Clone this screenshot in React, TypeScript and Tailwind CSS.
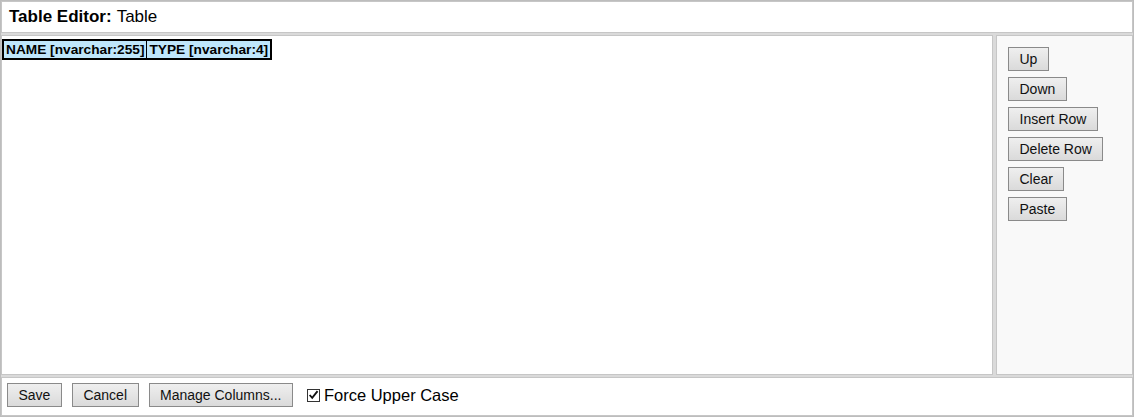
const font = { fontFamily: '"Liberation Sans", Arial, sans-serif' };

const btn =
  'h-[24px] border border-[#8a8a8a] bg-gradient-to-b from-[#efefef] to-[#dadada] px-[10.5px] text-[14px] leading-none text-[#111]';

function SideButton({ label }: { label: string }) {
  return <button type="button" className={btn}>{label}</button>;
}

function CheckMark() {
  return (
    <span className="flex h-[13px] w-[13px] items-center justify-center border border-[#333] bg-white">
      <svg viewBox="0 0 12 12" className="h-[12px] w-[12px]">
        <path d="M1.8 6 L4.6 9.2 L10.4 1.8" fill="none" stroke="#111" strokeWidth="2" />
      </svg>
    </span>
  );
}

export default function App() {
  const sideButtons = ['Up', 'Down', 'Insert Row', 'Delete Row', 'Clear', 'Paste'];

  return (
    <div
      style={font}
      className="flex h-[417px] w-[1134px] flex-col gap-[2px] border border-[#bdbdbd] bg-[#dadada] text-black"
    >
      {/* header */}
      <div className="flex h-[32px] shrink-0 items-center border border-[#c6c6c6] bg-white px-[7px] text-[17px]">
        <span className="font-bold">Table Editor:</span>
        <span className="ml-[5px]">Table</span>
      </div>

      {/* main */}
      <div className="flex h-[340px] shrink-0 gap-[3px]">
        <div className="w-[992px] shrink-0 border border-[#c6c6c6] bg-white pt-px">
          <div className="inline-flex border-2 border-black bg-[#bfe6fb] text-[13.7px] font-bold leading-none">
            <div className="flex h-[17px] items-center border-r border-black px-[2px]">NAME [nvarchar:255]</div>
            <div className="flex h-[17px] items-center px-[2px]">TYPE [nvarchar:4]</div>
          </div>
        </div>
        <div className="flex flex-1 flex-col items-start gap-[6px] border border-[#c6c6c6] bg-[#f9f9f9] p-[11px]">
          {sideButtons.map((b) => (
            <SideButton key={b} label={b} />
          ))}
        </div>
      </div>

      {/* footer */}
      <div className="flex h-[39px] shrink-0 items-start gap-[10px] border border-[#c6c6c6] bg-white pl-[5px] pt-[5px]">
        <button type="button" className={btn}>Save</button>
        <button type="button" className={btn}>Cancel</button>
        <button type="button" className={btn}>Manage Columns...</button>
        <label className="ml-[4px] flex h-[24px] items-center gap-[4px] text-[16.5px]">
          <CheckMark />
          <span>Force Upper Case</span>
        </label>
      </div>
    </div>
  );
}
